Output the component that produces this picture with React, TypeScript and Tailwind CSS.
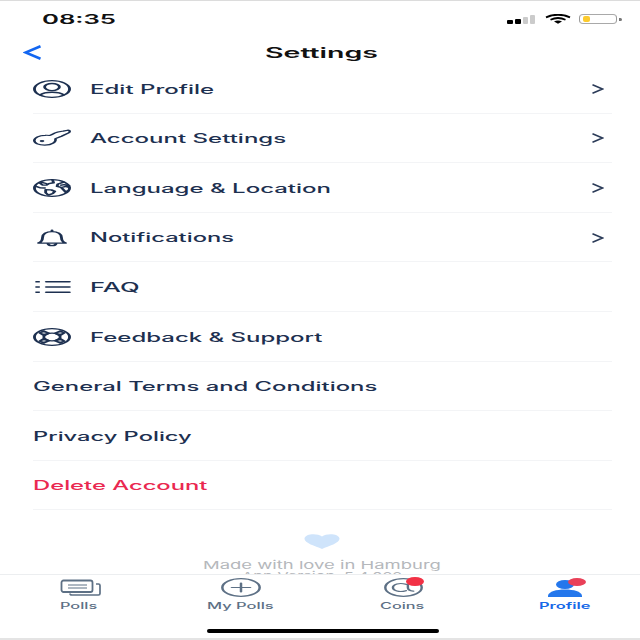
import { useLayoutEffect, useRef, type ReactNode } from "react";

/** Single line of text widened to fill an exact width. */
function Wide({ w, className = "", children }: { w: number; className?: string; children: ReactNode }) {
  const ref = useRef<HTMLSpanElement>(null);
  useLayoutEffect(() => {
    const el = ref.current;
    if (el) el.style.transform = `scaleX(${w / el.offsetWidth})`;
  }, [w]);
  return (
    <span className="flex shrink-0" style={{ width: w }}>
      <span ref={ref} className={`block shrink-0 origin-left whitespace-nowrap ${className}`}>
        {children}
      </span>
    </span>
  );
}

/** Icon drawn on a square 24 grid and stretched to its box. */
function Icon({ className, sw = 1.8, children }: { className: string; sw?: number; children: ReactNode }) {
  return (
    <svg viewBox="0 0 24 24" preserveAspectRatio="none" className={`shrink-0 overflow-visible ${className}`} fill="none" stroke="currentColor" strokeWidth={sw} strokeLinecap="round" strokeLinejoin="round">
      {children}
    </svg>
  );
}

const icons = {
  user: (
    <>
      <circle cx="12" cy="12" r="11.1" />
      <circle cx="12" cy="9.4" r="4.7" />
      <path d="M4.600 19.800c1.600-2.600 4.200-3.500 7.400-3.500s5.800.9 7.400 3.500" />
    </>
  ),
  key: (
    <>
      <path d="M10.500 8.600C12 8 13 6.200 14 5.200 15.500 3.800 17.500 3.300 19 2.800L22 1.600C23.300 1.300 23.700 4 22.500 5.200L18 9.600 14.200 12.800C14.800 17.500 12 21.600 7.400 21.600 3.600 21.600.8 19 .8 15.400S4 8.400 7.600 8.400Q9.200 8.200 10.500 8.600Z" strokeWidth="1.600" />
      <circle cx="5.700" cy="16" r=".6" fill="currentColor" />
    </>
  ),
  globe: (
    <>
      <circle cx="12" cy="12" r="11.100" />
      <path d="M4 4.800 6 8l2.500.2 1.500-2 3-1.200-.6-3.500M1.400 9.500l3 2.200 3 .3M8 14.200l3.500.3 2.300 2-1.300 2.800-2.800 2.200-1.700-3.200ZM19.500 4.200l-3.800 2.400-.5 3.200 2.600 1.400 1.200 2.600 1.800 4 1.300-2.500M17.800 8.300l2-.8 3 1.200M18 11.300l2.800-1.500 2 1.500M5.500 4.500l2.800 1.500" />
    </>
  ),
  bell: (
    <>
      <path d="M12 1.600v1.600M3.400 18.800C5.500 17 6 15.300 6 11.500c0-5 2.500-8.100 6-8.100s6 3.100 6 8.100c0 3.800.5 5.500 2.600 7.300Z" />
      <path d="M9.400 19.500c.2 2 1.200 2.600 2.600 2.600s2.400-.6 2.600-2.600" />
    </>
  ),
  list: (
    <>
      <path d="M8.400 5h14.600M8.400 12h14.600M8.400 19h14.600" strokeWidth="1.900" />
      <path d="M2.600 5h.6M2.600 12h.6M2.600 19h.6" strokeWidth="2.200" strokeLinecap="square" />
    </>
  ),
  buoy: (
    <>
      <circle cx="12" cy="12" r="11.100" />
      <circle cx="12" cy="12" r="5.200" />
      <path d="M4.200 6.500 6.800 4 10 7 7 10ZM19.800 6.500 17.200 4 14 7l3 3ZM4.200 17.500 6.800 20 10 17l-3-3ZM19.800 17.500 17.200 20 14 17l3-3Z" fill="currentColor" fillOpacity=".45" />
    </>
  ),
};

const rows = [
  { label: "Edit Profile", w: 125, icon: icons.user, arrow: true },
  { label: "Account Settings", w: 196, icon: icons.key, arrow: true },
  { label: "Language & Location", w: 242, icon: icons.globe, arrow: true },
  { label: "Notifications", w: 144, icon: icons.bell, arrow: true },
  { label: "FAQ", w: 49, icon: icons.list },
  { label: "Feedback & Support", w: 232, icon: icons.buoy },
  { label: "General Terms and Conditions", w: 345 },
  { label: "Privacy Policy", w: 159 },
  { label: "Delete Account", w: 175, danger: true },
];

function StatusBar() {
  return (
    <div className="flex h-[37px] shrink-0 items-center justify-between pl-[42px] pr-[18px] text-black">
      <Wide w={75} className="-mt-px text-[13px] font-semibold leading-4 text-[#111]">08:35</Wide>
      <div className="-mt-px flex items-center">
        <div className="mr-[10px] flex h-[9px] items-end gap-[2px]">
          <i className="h-[4px] w-[6px] rounded-[1px] bg-black" />
          <i className="h-[5px] w-[6px] rounded-[1px] bg-black" />
          <i className="h-[7px] w-[5px] rounded-[1px] bg-[#cbcbcb]" />
          <i className="h-[9px] w-[5px] rounded-[1px] bg-[#cbcbcb]" />
        </div>
        <svg viewBox="0 0 26 10" className="mr-[8px] h-[10px] w-[26px]" fill="none" stroke="#000">
          <path d="M1 3.300Q13-1.700 25 3.300" strokeWidth="2" />
          <path d="M5.500 5.700Q13 2.300 20.500 5.700" strokeWidth="1.800" />
          <path d="M9 7.600Q13 5.500 17 7.600L13 9.800Z" fill="#000" stroke="none" />
        </svg>
        <div className="flex h-[10px] w-[38px] items-center rounded-[4px] border border-[#a9a9a9] border-x-[#999] pl-[3px]">
          <i className="h-[6px] w-[7px] rounded-[2px] bg-[#fccb2e]" />
        </div>
        <i className="ml-[2px] h-[3px] w-[3px] rounded-r-full bg-[#777]" />
      </div>
    </div>
  );
}

function Tab({ label, w, icon, className = "text-[#5d7085] font-medium" }: { label: string; w: number; icon: ReactNode; className?: string }) {
  return (
    <div className={`flex w-1/4 shrink-0 flex-col items-center ${className}`}>
      <div className="flex h-[25px] items-center justify-center">{icon}</div>
      <Wide w={w} className="text-[9px] leading-[11px]">{label}</Wide>
    </div>
  );
}

export default function App() {
  return (
    <div className="flex h-[640px] w-[640px] flex-col overflow-hidden border-b-2 border-t-1 border-b-[#e4e4e4] border-t-[#dcdcdc] bg-white font-['Inter','Liberation_Sans',sans-serif]">
      <StatusBar />
      <header className="grid h-[26px] shrink-0 grid-cols-[242px_1fr] items-center pl-[23px] pt-[3px]">
        <svg viewBox="0 0 18 15" className="h-[15px] w-[18px]" fill="none" stroke="#1266f1" strokeWidth="2.600">
          <path d="M17.500 1.200 2.500 7.500 17.500 13.800" />
        </svg>
        <Wide w={114} className="text-[14px] font-semibold leading-5 text-[#111]">Settings</Wide>
      </header>
      <main className="flex h-[510px] flex-col overflow-hidden">
        <ul className="ml-[33px] mr-[28px] shrink-0">
          {rows.map((r) => (
            <li key={r.label} className={`flex h-[49.600px] items-center border-b border-[#f3f4f6] pt-px ${r.danger ? "text-[#ea2850]" : "text-[#1d3050]"}`}>
              {r.icon && <Icon className="mr-[19px] h-[18px] w-[38px]">{r.icon}</Icon>}
              <Wide w={r.w} className="pt-[1.500px] text-[12.500px] font-medium leading-4">{r.label}</Wide>
              {r.arrow && (
                <svg viewBox="0 0 12 10" className="ml-auto mr-[8px] h-[10px] w-[12px]" fill="none" stroke="#2b3b58" strokeWidth="1.600">
                  <path d="M.5.8 10.500 5 .5 9.200" />
                </svg>
              )}
            </li>
          ))}
        </ul>
        <div className="flex shrink-0 flex-col items-center pl-[3px] pt-[24px]">
          <svg viewBox="0 0 36 15" className="h-[15px] w-[36px]" fill="#cfe4fb">
            <path d="M18 15C11 12 0 9 .5 4.500 1-.2 13-1.200 18 2.600 23-1.200 35-.2 35.500 4.500 36 9 25 12 18 15Z" />
          </svg>
          <div className="mt-[10px] flex flex-col items-center text-[#b5b8bc]">
            <Wide w={238} className="text-[11px] leading-[12px]">Made with love in Hamburg</Wide>
            <Wide w={160} className="text-[11px] leading-[10px]">App Version: 5.4.022</Wide>
          </div>
        </div>
      </main>
      <nav className="flex h-[54px] shrink-0 border-t border-[#eceef0] bg-white">
        <Tab
          label="Polls"
          w={38}
          className="pr-[2px] font-medium text-[#5d7085]"
          icon={
            <svg viewBox="0 0 42 18" className="h-[18px] w-[42px] translate-x-[2px]" fill="none" stroke="currentColor">
              <rect x="1.500" y="1.500" width="31" height="11.500" rx="2" strokeWidth="1.800" />
              <path d="M8 6h19M8 9h19" strokeWidth="1" />
              <path d="M36 5h2.500q1.500 0 1.500 1.500v8q0 1.500-1.500 1.500H12q-2 0-2-1.500" strokeWidth="1.700" />
            </svg>
          }
        />
        <Tab
          label="My Polls"
          w={66}
          icon={
            <Icon className="h-[19px] w-[40px] translate-x-[1px]" sw={1.500}>
              <circle cx="12" cy="12" r="11.200" />
              <path d="M12 6.500v11M6.500 12h11" />
            </Icon>
          }
        />
        <Tab
          label="Coins"
          w={45}
          className="pl-[4px] font-medium text-[#5d7085]"
          icon={
            <div className="relative translate-x-[1px]">
              <Icon className="h-[19px] w-[39px]" sw={1.500}>
                <circle cx="12" cy="12" r="11.200" />
                <path d="M13.500 8C9.500 5.400 5.500 8 5.500 12s4 6.600 8 4M18 16.500c-2.300-.3-3.300-1.800-3.300-4.500V8" />
              </Icon>
              <i className="absolute -right-px -top-px h-[9px] w-[18px] rounded-[50%] bg-[#f23145]" />
            </div>
          }
        />
        <Tab
          label="Profile"
          w={51}
          className="pl-[9px] font-semibold text-[#1769e8]"
          icon={
            <div className="relative text-[#2477ec]">
              <svg viewBox="0 0 34 18" className="h-[18px] w-[34px]" fill="currentColor">
                <ellipse cx="17" cy="5.500" rx="9" ry="4.500" />
                <path d="M0 18v-1.500C1 12.500 8 10.500 17 10.500s16 2 17 6V18Z" />
              </svg>
              <i className="absolute -right-[4px] -top-px h-[8px] w-[18px] rounded-[50%] bg-[#e94058]" />
            </div>
          }
        />
      </nav>
      <div className="flex h-[10px] shrink-0 justify-center bg-white pl-[5px]">
        <i className="mt-px h-[4px] w-[232px] rounded-full bg-black" />
      </div>
    </div>
  );
}
